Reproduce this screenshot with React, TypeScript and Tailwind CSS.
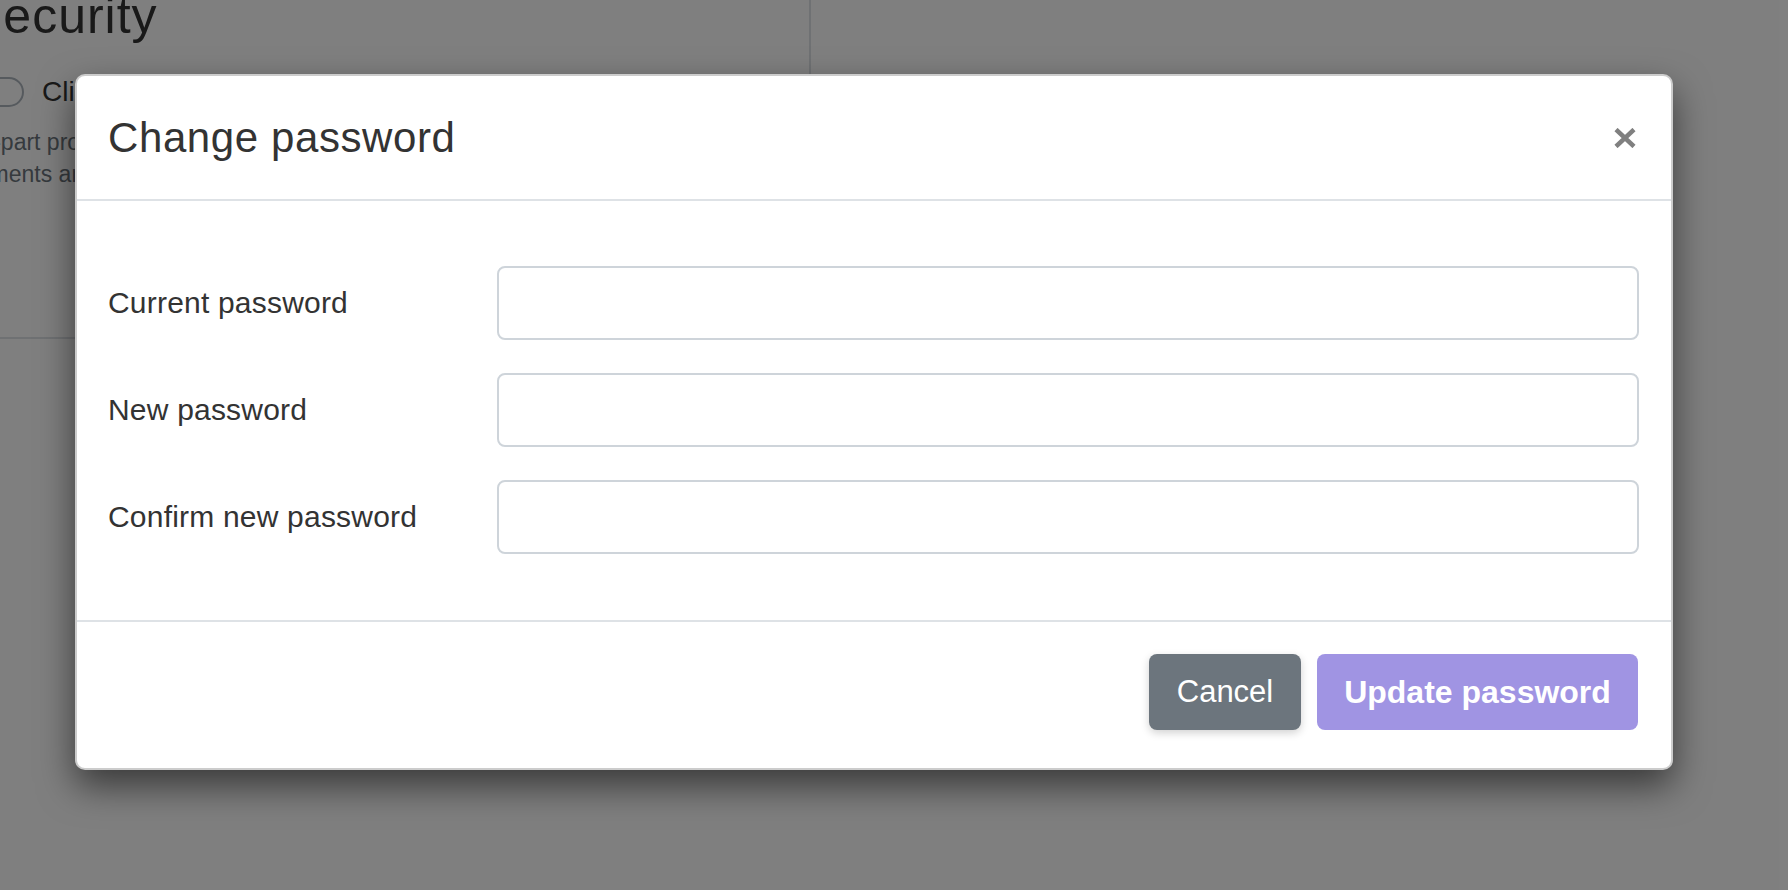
import React from 'react';

const fields = ['Current password', 'New password', 'Confirm new password'];

export default function App() {
    return (
        <div className="relative h-[890px] w-full overflow-hidden bg-white font-['Liberation_Sans',Arial,sans-serif] text-[#333]">
            {/* page behind the dialog */}
            <div className="flex">
                <div className="h-[700px] w-[811px] shrink-0 overflow-hidden border-r-2 border-[#dee2e6]">
                    <div className="flex h-[339px] flex-col border-b-2 border-[#dee2e6]">
                        <h2 className="-ml-[31px] -mt-[9px] text-[50px] leading-none tracking-[1px] text-[#333]">
                            Security
                        </h2>
                        <div className="mt-[36px] flex items-center">
                            <div className="-ml-[32px] h-[30px] w-[56px] rounded-full border-2 border-[#adb5bd] bg-white" />
                            <span className="ml-[18px] text-[28px] leading-none">Click to enable two-factor authentication</span>
                        </div>
                        <div className="mt-[19px] text-[23px] leading-[32px] text-[#6c757d]">
                            <p className="-ml-[49px] whitespace-nowrap">Two-part protection keeps your account safe</p>
                            <p className="-ml-[82px] whitespace-nowrap">requirements are sent to your device</p>
                        </div>
                    </div>
                </div>
            </div>

            {/* backdrop */}
            <div className="absolute inset-0 bg-black/50" />

            {/* dialog */}
            <div className="absolute left-[75px] top-[74px] w-[1598px] rounded-[10px] border-2 border-black/20 bg-white shadow-[0_16px_36px_rgba(0,0,0,0.55)]">
                <div className="flex h-[125px] items-center justify-between border-b-2 border-[#dee2e6] pl-[31px] pr-[35px]">
                    <h3 className="text-[42px] leading-none tracking-[0.6px] text-[#333]">Change password</h3>
                    <button type="button" className="flex h-[20px] w-[22px] items-center justify-center">
                        <svg width="22" height="20" viewBox="0 0 22 20">
                            <path d="M2 1.5 L20 18.5 M20 1.5 L2 18.5" stroke="#808080" strokeWidth="4.5" />
                        </svg>
                    </button>
                </div>

                <div className="flex flex-col gap-[33px] pl-[31px] pr-[32px] pt-[65px] pb-[66px]">
                    {fields.map(label => (
                        <div key={label} className="grid grid-cols-[389px_1fr] items-center">
                            <label className="text-[30px] leading-none tracking-[0.2px] text-[#333]">{label}</label>
                            <input
                                type="password"
                                className="h-[74px] w-full rounded-[8px] border-2 border-[#ced4da] bg-white px-[24px] text-[30px] outline-none"
                            />
                        </div>
                    ))}
                </div>

                <div className="flex justify-end gap-[16px] border-t-2 border-[#dee2e6] pr-[33px] pt-[32px] pb-[38px]">
                    <button
                        type="button"
                        className="flex h-[76px] w-[152px] items-center justify-center rounded-[8px] bg-[#6c757d] text-[31px] text-white shadow-[0_3px_8px_rgba(0,0,0,0.18)]"
                    >
                        Cancel
                    </button>
                    <button
                        type="button"
                        className="flex h-[76px] w-[321px] items-center justify-center rounded-[8px] bg-[#a094e3] text-[32px] font-bold text-white"
                    >
                        Update password
                    </button>
                </div>
            </div>
        </div>
    );
}
